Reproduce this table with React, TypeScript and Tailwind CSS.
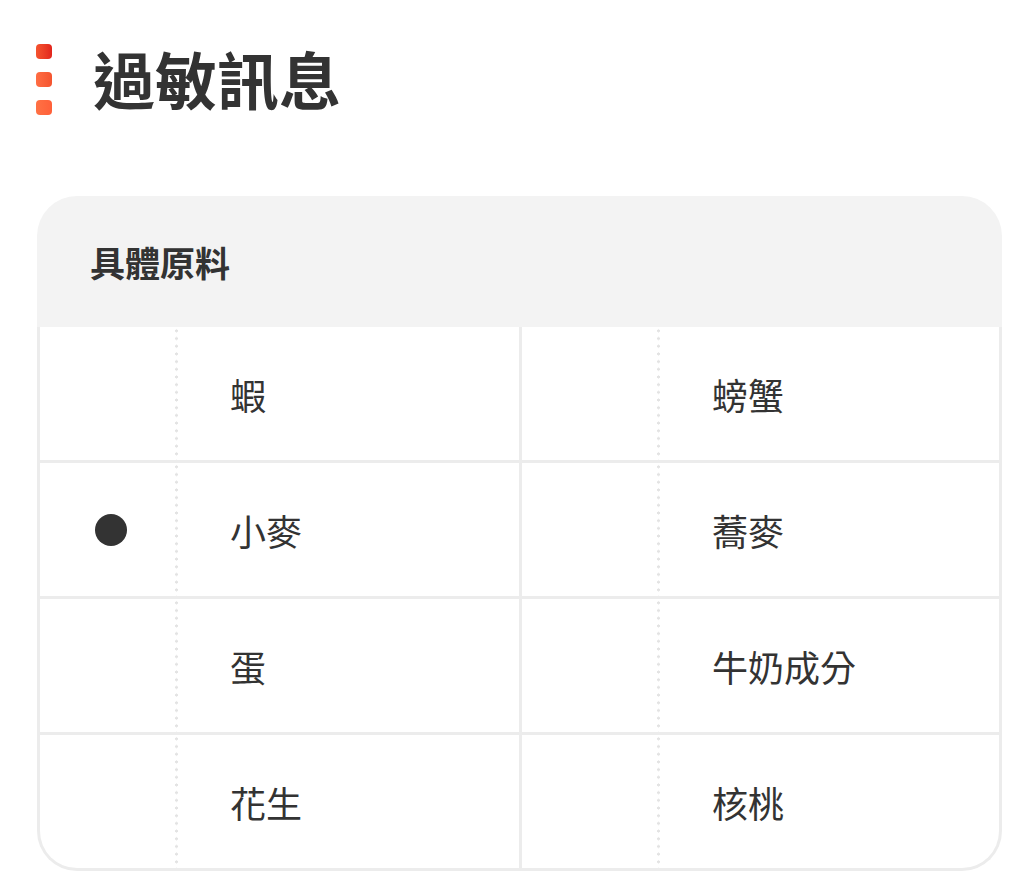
import React from 'react';

const FONT = '"Noto Sans CJK TC", "Noto Sans", sans-serif';

const rows: [string, boolean, string][] = [
  ['蝦', false, '螃蟹'],
  ['小麥', true, '蕎麥'],
  ['蛋', false, '牛奶成分'],
  ['花生', false, '核桃'],
];

const DottedLine = () => (
  <div className="w-[3px] self-stretch bg-[radial-gradient(circle,#e3e3e3_1.3px,transparent_1.7px)] bg-[length:3px_7.7px] bg-repeat-y" />
);

const Cell: React.FC<{ label: string; marked: boolean }> = ({ label, marked }) => (
  <div className="flex h-full">
    <div className="flex w-[135px] shrink-0 items-center pl-[55px]">
      {marked && <div className="h-[32px] w-[32px] rounded-full bg-[#333333]" />}
    </div>
    <DottedLine />
    <div className="flex items-center pl-[52px] text-[36px] leading-none text-[#333333]">{label}</div>
  </div>
);

export default function App() {
  return (
    <div className="min-h-screen bg-white" style={{ fontFamily: FONT }}>
      {/* title */}
      <div className="flex items-center pl-[36px] pt-[44px]">
        <div className="flex flex-col gap-[13px]">
          <div className="h-[15px] w-[16px] rounded-[4px] bg-gradient-to-r from-[#f5532f] to-[#e2241c]" />
          <div className="h-[15px] w-[16px] rounded-[4px] bg-gradient-to-r from-[#ff6d43] to-[#f4542f]" />
          <div className="h-[15px] w-[16px] rounded-[4px] bg-gradient-to-r from-[#ff7144] to-[#ff6039]" />
        </div>
        <h1 className="ml-[41px] -mt-[3px] text-[62px] font-bold leading-none text-[#333333]">過敏訊息</h1>
      </div>

      {/* table card */}
      <div className="ml-[37px] mt-[81px] w-[965px] overflow-hidden rounded-t-[40px]">
        <div className="flex h-[131px] items-center bg-[#f3f3f3] pl-[53px] text-[35px] font-bold leading-none text-[#333333]">
          具體原料
        </div>
        <div className="rounded-b-[40px] border-[3px] border-t-0 border-[#ececec]">
          {rows.map(([a, marked, b], i) => (
            <div
              key={a}
              className={`grid grid-cols-[482px_1fr] ${i > 0 ? 'h-[136px] border-t-[3px] border-[#ececec]' : 'h-[133px]'}`}
            >
              <div className="border-r-[3px] border-[#ececec]">
                <Cell label={a} marked={marked} />
              </div>
              <Cell label={b} marked={false} />
            </div>
          ))}
        </div>
      </div>
    </div>
  );
}
